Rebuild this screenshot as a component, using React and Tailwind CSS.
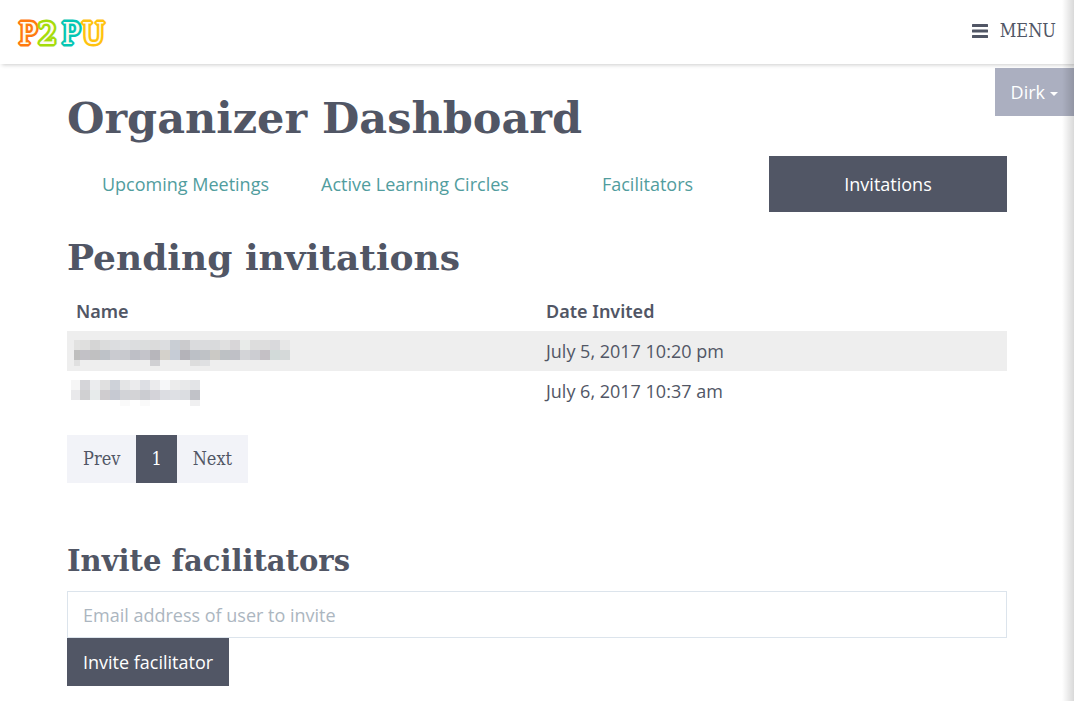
import React from "react";

const SLAB = "font-['DejaVu_Serif',serif]";
const SLAB_NARROW = "font-['DejaVu_Serif_Condensed','DejaVu_Serif',serif]";

const LETTERS = [
  { ch: "P", x: 3, color: "#ff7a0f", font: SLAB_NARROW },
  { ch: "2", x: 22, color: "#a5dc0b", font: SLAB },
  { ch: "P", x: 46, color: "#05c6b4", font: SLAB_NARROW },
  { ch: "U", x: 66, color: "#ffc20e", font: SLAB_NARROW },
];

function Logo() {
  return (
    <svg width="96" height="48" viewBox="0 0 96 48" role="img" aria-label="P2PU">
      {LETTERS.map((l) => (
        <text
          key={l.x}
          x={l.x}
          y="36"
          fontSize="30"
          fill="#fdfaf0"
          stroke={l.color}
          strokeWidth="5"
          strokeLinejoin="bevel"
          paintOrder="stroke"
          className={l.font}
        >
          {l.ch}
        </text>
      ))}
    </svg>
  );
}

const FIRST = {
  left: 74,
  right: 290,
  rows: [
    ["#e2e2e1", "#dfdfde", "#d5d5d5", "#dbdcdc", "#dcdde0", "#dee0e2", "#dcdddf", "#dbdddd", "#dbdbdb", "#dcdde0", "#c9ced4", "#cbcbcd", "#dadbdd", "#dadbdd", "#d9dadc", "#e0e0e0", "#d8d6d8", "#e8ebe9", "#dddddd", "#dddddd", "#d9d9dc", "#e7e7e7"],
    ["#bfbfbe", "#c2c1c6", "#c0c0c1", "#bec2c8", "#cacbd0", "#c8c9ce", "#bebfc6", "#c4c4ca", "#b7b6bb", "#d4d1cb", "#c6ccd6", "#b4b3b9", "#bcc0c6", "#bfc2c6", "#cbc9c5", "#bdc1c4", "#bfc0c6", "#d3d4d7", "#cccdd2", "#c4c0c5", "#d2dad9", "#d5d9d9"],
    ["#e0e0e0", null, null, null, null, null, null, null, "#d0d0d3", "#eeeeee", null, null, "#dddddd", "#dfe0e2"],
  ],
};

const SECOND = {
  left: 71,
  right: 200,
  rows: [
    ["#f6f6f6", "#d5d5d9", "#ebecee", "#e0e0e0", "#ced2d9", "#e4e5e6", "#ebebed", "#dddfe4", "#ebebed", "#f6f7f9", "#ececec", "#e8e9ea", "#e3e4e7"],
    ["#e9e9eb", "#d0d0d2", "#e7ebeb", "#cfcccf", "#c6c9d2", "#d2d3d7", "#d3d3d6", "#cbccd1", "#d4d3d9", "#dcdde2", "#dee0e4", "#dbdde1", "#c1c2c8"],
    [null, null, null, null, null, "#fafafa", null, "#fafafa", null, null, null, null, "#f0f0f1"],
  ],
};

function Mosaic({ data, label, className }) {
  const edge = (i) => (i === 0 ? data.left : 70 + i * 10);
  return (
    <svg
      width={data.right - data.left}
      height="26"
      role="img"
      aria-label={label}
      shapeRendering="crispEdges"
      className={className}
    >
      {data.rows.map((row, r) =>
        row.map((color, i) =>
          color ? (
            <rect
              key={`${r}-${i}`}
              x={edge(i) - data.left}
              y={r * 10}
              width={edge(i + 1) - edge(i)}
              height="10"
              fill={color}
            />
          ) : null
        )
      )}
    </svg>
  );
}

export default function App() {
  return (
    <div className="relative min-h-screen overflow-hidden bg-white font-['Open_Sans','Noto_Sans',sans-serif] text-lg text-[#515665]">
      <header className="flex h-16 items-center justify-between px-4 shadow-[2px_1px_4px_rgba(0,0,0,0.2)]">
        <a href="#home" aria-label="P2PU home">
          <Logo />
        </a>
        <button type="button" className={`flex items-center gap-3 pr-0.5 pb-0.5 text-lg ${SLAB_NARROW}`}>
          <svg width="16" height="14" viewBox="0 0 16 14" fill="currentColor" aria-hidden="true">
            <rect y="0" width="16" height="3" rx="0.5" />
            <rect y="5.5" width="16" height="3" rx="0.5" />
            <rect y="11" width="16" height="3" rx="0.5" />
          </svg>
          MENU
        </button>
      </header>

      <button type="button" className="absolute right-0 top-[68px] flex h-12 items-center gap-[5px] bg-[#abafc0] px-4 text-white">
        Dirk
        <svg width="8" height="4" viewBox="0 0 8 4" fill="currentColor" aria-hidden="true" className="mt-1">
          <path d="M0 0H8L4 4Z" />
        </svg>
      </button>

      <main className="mx-auto w-full max-w-[940px] pt-6 pb-4">
        <h1 className={`text-[43px] leading-[60px] font-bold ${SLAB}`}>Organizer Dashboard</h1>

        <nav className="mt-2 grid h-14 grid-cols-[237fr_222fr_243fr_238fr] text-center leading-[56px] text-[#519d9e]">
          <a href="#meetings">Upcoming Meetings</a>
          <a href="#circles">Active Learning Circles</a>
          <a href="#facilitators">Facilitators</a>
          <a href="#invitations" aria-current="page" className="bg-[#515665] text-white">Invitations</a>
        </nav>

        <h2 className={`mt-5 text-4xl leading-[51px] font-bold ${SLAB}`}>Pending invitations</h2>
        <table className="mt-2 w-full table-fixed text-left">
          <thead className="font-['Noto_Sans','Open_Sans',sans-serif]">
            <tr className="h-10">
              <th scope="col" className="px-[9px] font-semibold">Name</th>
              <th scope="col" className="px-[9px] font-semibold">Date Invited</th>
            </tr>
          </thead>
          <tbody>
            <tr className="h-10 bg-[#eee]">
              <td className="px-[7px]"><Mosaic data={FIRST} label="Hidden address" className="mt-1 block" /></td>
              <td className="px-[9px]">July 5, 2017 10:20 pm</td>
            </tr>
            <tr className="h-10">
              <td className="px-1"><Mosaic data={SECOND} label="Hidden address" className="mt-1 block" /></td>
              <td className="px-[9px]">July 6, 2017 10:37 am</td>
            </tr>
          </tbody>
        </table>

        <nav aria-label="Pages" className={`mt-6 flex text-lg leading-[48px] ${SLAB_NARROW}`}>
          <a href="#prev" className="bg-[#f2f3f8] px-4">Prev</a>
          <a href="#page-1" aria-current="page" className="bg-[#515665] px-[15px] text-white">1</a>
          <a href="#next" className="bg-[#f2f3f8] px-4">Next</a>
        </nav>

        <h3 className={`mt-14 text-[29px] leading-[44px] font-bold ${SLAB}`}>Invite facilitators</h3>
        <form className="mt-2" onSubmit={(e) => e.preventDefault()}>
          <input
            type="email"
            aria-label="Email address of user to invite"
            placeholder="Email address of user to invite"
            className="block h-[47px] w-full border border-[#dce4ec] bg-white px-[15px] placeholder:text-[#acb6c0]"
          />
          <button type="submit" className="h-12 bg-[#515665] px-4 text-white">Invite facilitator</button>
        </form>
      </main>

      <div className="pointer-events-none absolute inset-y-0 right-0 w-3 bg-linear-to-l from-black/15 to-transparent" />
    </div>
  );
}
